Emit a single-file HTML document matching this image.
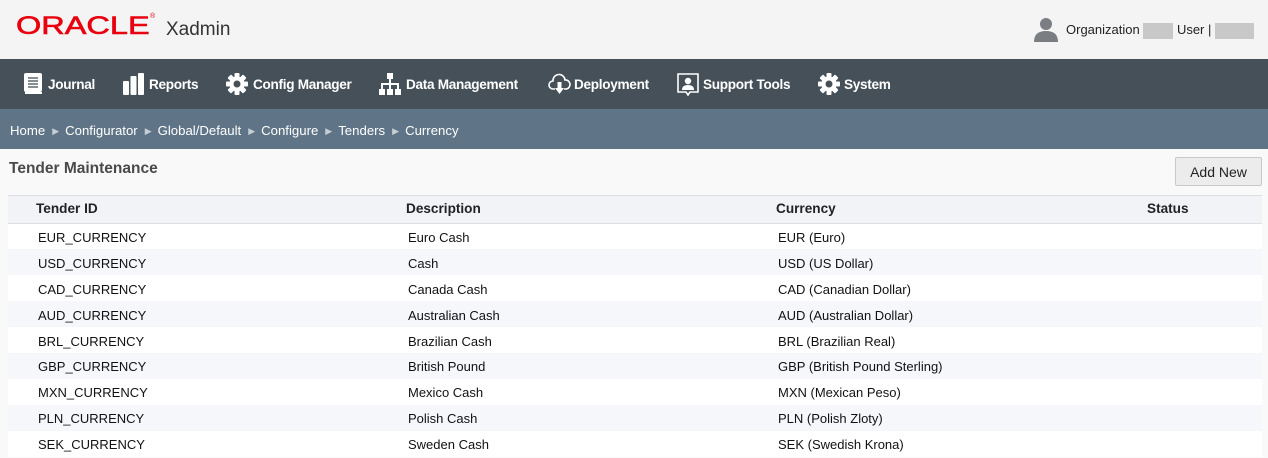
<!DOCTYPE html>
<html><head><style>
*{margin:0;padding:0;box-sizing:border-box}
body{width:1268px;height:458px;overflow:hidden;background:#f9f9f9;font-family:"Liberation Sans",Arial,sans-serif;position:relative}
.hdr{position:absolute;left:0;top:0;width:1268px;height:59px;background:#f4f4f4}
.logo{position:absolute;left:16px;top:12px;color:#e8000e;font-size:25px;font-weight:normal;letter-spacing:0px;transform:scaleX(1.3);transform-origin:left;-webkit-text-stroke:0.6px #e8000e}
.xad{position:absolute;left:166px;top:19px;font-size:19px;color:#333}
.usr{position:absolute;left:1066px;top:22px;font-size:13px;color:#222}
.blk{display:inline-block;background:#c8c8c8;height:16px;vertical-align:middle}
.nav{position:absolute;left:0;top:59px;width:1268px;height:50px;background:#455059}
.ni{position:absolute;top:18px;color:#fff;font-weight:bold;font-size:13.6px;letter-spacing:-0.3px}
.ni svg{position:absolute;top:-4px}
.bc{position:absolute;left:0;top:109px;width:1268px;height:40px;background:#5f7487;color:#fff;font-size:13.2px;padding:14px 0 0 10px}
.bc span.a{color:#c5ced6;font-size:9px;margin:0 6px 0 7px;position:relative;top:-1px}
.tt{position:absolute;left:9px;top:160px;font-size:15.5px;font-weight:bold;color:#4a4a4a}
.btn{position:absolute;left:1175px;top:157px;width:87px;height:29px;background:#ececec;border:1px solid #c8c8c8;border-radius:2px;font-size:14px;color:#222;text-align:center;line-height:28px}
table{position:absolute;left:8px;top:195px;width:1254px;border-collapse:collapse;font-size:13px;color:#111}
th{height:28px;background:#f1f3f7;border-top:1px solid #dcdfe3;border-bottom:1px solid #dcdfe3;text-align:left;font-weight:bold;font-size:13.6px;color:#222;padding-bottom:2px}
td{height:25.9px;padding-top:2px}
tr:nth-child(odd) td{background:#f5f7fb}
tr:nth-child(even) td{background:#fff}
</style></head><body>
<div class="hdr">
<div class="logo">ORACLE</div><span style="position:absolute;left:150px;top:13px;color:#e8000e;font-size:7px">®</span>
<div class="xad">Xadmin</div>
<svg style="position:absolute;left:1033px;top:16px" width="26" height="26" viewBox="0 0 26 26"><circle cx="13" cy="8" r="6" fill="#7a7d82"/><path d="M1 26 Q1 15 13 15 Q25 15 25 26Z" fill="#7a7d82"/></svg>
<div class="usr">Organization <span class="blk" style="width:30px"></span> User | <span class="blk" style="width:39px"></span></div>
</div>
<div class="nav">
<div class="ni" style="left:24px"><svg width="19" height="22" viewBox="0 0 19 22" style="left:0"><rect x="0" y="0" width="18" height="19" rx="2" fill="#fff"/><rect x="1" y="19" width="17" height="2" fill="#fff"/><g stroke="#455059" stroke-width="1.3"><line x1="4" y1="5" x2="14" y2="5"/><line x1="4" y1="8" x2="14" y2="8"/><line x1="4" y1="11" x2="14" y2="11"/><line x1="4" y1="14" x2="14" y2="14"/></g></svg><span style="margin-left:24px">Journal</span></div>
<div class="ni" style="left:123px"><svg width="22" height="22" viewBox="0 0 22 22" style="left:0"><rect x="0" y="8" width="6" height="14" rx="1" fill="#fff"/><rect x="7.5" y="3" width="6" height="19" rx="1" fill="#fff"/><rect x="15" y="0" width="6" height="22" rx="1" fill="#fff"/></svg><span style="margin-left:26px">Reports</span></div>
<div class="ni" style="left:226px"><svg width="22" height="22" viewBox="0 0 22 22" style="left:0"><g fill="#fff"><circle cx="11" cy="11" r="7.5"/><rect x="8.5" y="0" width="5" height="22" rx="1"/><rect x="8.5" y="0" width="5" height="22" rx="1" transform="rotate(45 11 11)"/><rect x="8.5" y="0" width="5" height="22" rx="1" transform="rotate(90 11 11)"/><rect x="8.5" y="0" width="5" height="22" rx="1" transform="rotate(135 11 11)"/></g><circle cx="11" cy="11" r="3.5" fill="#455059"/></svg><span style="margin-left:27px">Config Manager</span></div>
<div class="ni" style="left:379px"><svg width="22" height="22" viewBox="0 0 22 22" style="left:0"><g fill="#fff"><rect x="8" y="0" width="6" height="6"/><rect x="0" y="16" width="6" height="6"/><rect x="8" y="16" width="6" height="6"/><rect x="16" y="16" width="6" height="6"/></g><path d="M11 6V16M3 16V11H19V16" stroke="#fff" stroke-width="2" fill="none"/></svg><span style="margin-left:27px">Data Management</span></div>
<div class="ni" style="left:548px"><svg width="23" height="22" viewBox="0 0 23 22" style="left:0"><path d="M7 16H5A4 4 0 0 1 5 8A6 6 0 0 1 17 7A4.5 4.5 0 0 1 18 16H16" stroke="#fff" stroke-width="1.6" fill="none"/><rect x="9.5" y="9" width="4" height="7" fill="#fff"/><path d="M7 15H16L11.5 21Z" fill="#fff"/></svg><span style="margin-left:26px">Deployment</span></div>
<div class="ni" style="left:677px"><svg width="22" height="23" viewBox="0 0 22 23" style="left:0"><path d="M1 1H21V19H13L11 22L9 19H1Z" stroke="#fff" stroke-width="1.6" fill="none"/><circle cx="11" cy="8" r="3.2" fill="#fff"/><path d="M5 17Q5 12 11 12Q17 12 17 17Z" fill="#fff"/></svg><span style="margin-left:26px">Support Tools</span></div>
<div class="ni" style="left:818px"><svg width="22" height="22" viewBox="0 0 22 22" style="left:0"><g fill="#fff"><circle cx="11" cy="11" r="7.5"/><rect x="8.5" y="0" width="5" height="22" rx="1"/><rect x="8.5" y="0" width="5" height="22" rx="1" transform="rotate(45 11 11)"/><rect x="8.5" y="0" width="5" height="22" rx="1" transform="rotate(90 11 11)"/><rect x="8.5" y="0" width="5" height="22" rx="1" transform="rotate(135 11 11)"/></g><circle cx="11" cy="11" r="3.5" fill="#455059"/></svg><span style="margin-left:26px">System</span></div>
</div>
<div class="bc">Home<span class="a">▶</span>Configurator<span class="a">▶</span>Global/Default<span class="a">▶</span>Configure<span class="a">▶</span>Tenders<span class="a">▶</span>Currency</div>
<div class="tt">Tender Maintenance</div>
<div class="btn">Add New</div>
<table>
<colgroup><col style="width:370px"><col style="width:370px"><col style="width:371px"><col></colgroup>
<tr><th style="padding-left:28px">Tender ID</th><th style="padding-left:28px">Description</th><th style="padding-left:28px">Currency</th><th style="padding-left:28px">Status</th></tr>
<tr><td style="padding-left:30px">EUR_CURRENCY</td><td style="padding-left:30px">Euro Cash</td><td style="padding-left:30px">EUR (Euro)</td><td></td></tr>
<tr><td style="padding-left:30px">USD_CURRENCY</td><td style="padding-left:30px">Cash</td><td style="padding-left:30px">USD (US Dollar)</td><td></td></tr>
<tr><td style="padding-left:30px">CAD_CURRENCY</td><td style="padding-left:30px">Canada Cash</td><td style="padding-left:30px">CAD (Canadian Dollar)</td><td></td></tr>
<tr><td style="padding-left:30px">AUD_CURRENCY</td><td style="padding-left:30px">Australian Cash</td><td style="padding-left:30px">AUD (Australian Dollar)</td><td></td></tr>
<tr><td style="padding-left:30px">BRL_CURRENCY</td><td style="padding-left:30px">Brazilian Cash</td><td style="padding-left:30px">BRL (Brazilian Real)</td><td></td></tr>
<tr><td style="padding-left:30px">GBP_CURRENCY</td><td style="padding-left:30px">British Pound</td><td style="padding-left:30px">GBP (British Pound Sterling)</td><td></td></tr>
<tr><td style="padding-left:30px">MXN_CURRENCY</td><td style="padding-left:30px">Mexico Cash</td><td style="padding-left:30px">MXN (Mexican Peso)</td><td></td></tr>
<tr><td style="padding-left:30px">PLN_CURRENCY</td><td style="padding-left:30px">Polish Cash</td><td style="padding-left:30px">PLN (Polish Zloty)</td><td></td></tr>
<tr><td style="padding-left:30px">SEK_CURRENCY</td><td style="padding-left:30px">Sweden Cash</td><td style="padding-left:30px">SEK (Swedish Krona)</td><td></td></tr>
</table>
</body></html>
